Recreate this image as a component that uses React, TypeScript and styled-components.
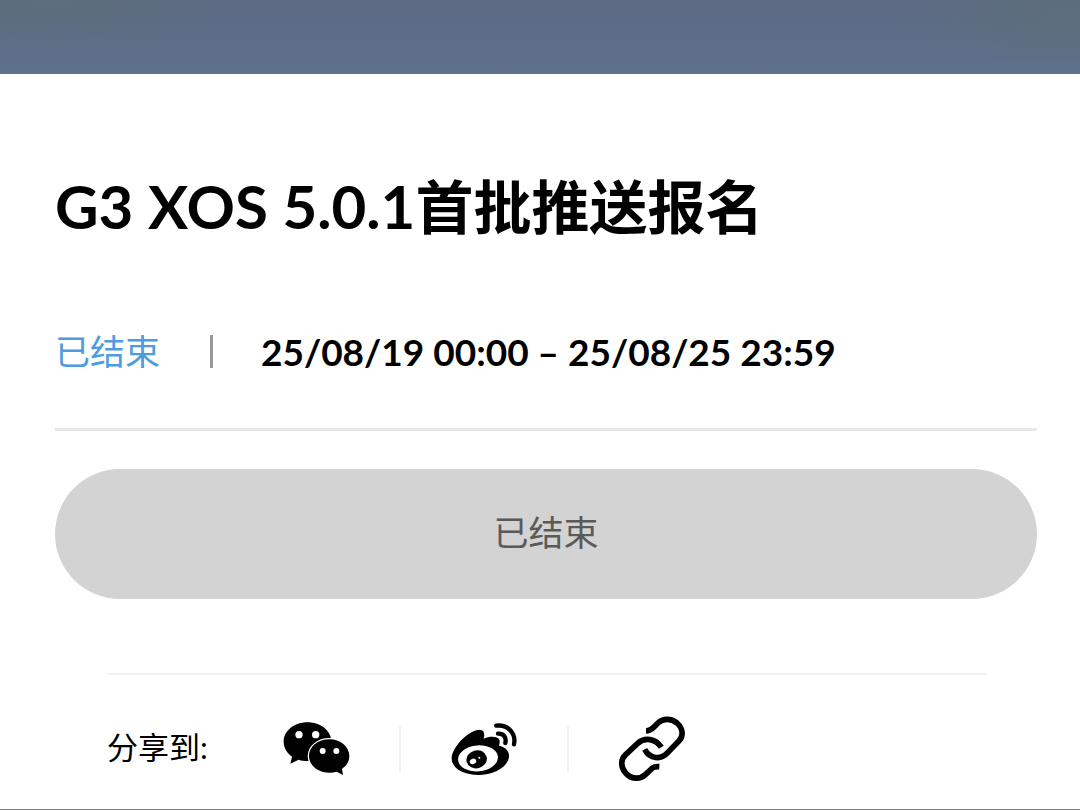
import React from "react";
import styled, { createGlobalStyle } from "styled-components";

const GlobalStyle = createGlobalStyle`
  *, *::before, *::after { box-sizing: border-box; }
  body {
    margin: 0;
    background: #ffffff;
    color: #000000;
    font-family: Lato, "Noto Sans CJK SC", sans-serif;
  }
`;

const Page = styled.div`
  min-height: 100vh;
  border-bottom: 1px solid #848484;
`;

const Banner = styled.div`
  height: 74px;
  background:
    radial-gradient(ellipse 190px 50px at 5% 0, #5d6e7c, transparent),
    radial-gradient(ellipse 190px 50px at 100% 20%, #5d6e7c, transparent),
    linear-gradient(#5c6a83, #5e718b);
`;

const Content = styled.main`
  padding: 90px 43px 0 55px;
`;

const Title = styled.h1`
  margin: 0;
  font-size: 58px;
  line-height: 84px;
  font-weight: 700;
`;

const Version = styled.span`
  font-size: 60px;
`;

const Meta = styled.div`
  display: flex;
  align-items: center;
  height: 52px;
  margin-top: 76px;
  font-size: 35px;
`;

const Status = styled.span`
  width: 155px;
  padding-bottom: 4px;
  color: #4f9be0;
`;

const MetaRule = styled.span`
  width: 3px;
  height: 33px;
  margin-right: 48px;
  background: #999999;
`;

const Period = styled.span`
  font-size: 37px;
  font-weight: 700;
  white-space: nowrap;
`;

const Divider = styled.hr<{ $tone: string; $size: number }>`
  margin: 0;
  border: 0;
  height: ${(p) => p.$size}px;
  background: ${(p) => p.$tone};
`;

const EndedButton = styled.button`
  display: block;
  width: 100%;
  height: 130px;
  margin: 38px 0 74px;
  padding: 0 0 8px;
  border: 0;
  border-radius: 65px;
  background: #d3d3d3;
  color: #5a5a5a;
  font: inherit;
  font-size: 35px;
`;

const Summary = styled.header`
  padding-bottom: 51px;
`;

const Share = styled.section`
  margin: 0 50px 0 52px;
`;

const ShareRow = styled.div`
  display: flex;
  align-items: center;
  padding-top: 50px;
`;

const ShareLabel = styled.span`
  width: 124px;
  padding-bottom: 4px;
  font-size: 31px;
  line-height: 44px;
`;

const ShareButton = styled.button`
  display: flex;
  align-items: center;
  justify-content: center;
  width: 168px;
  height: 46px;
  padding: 0;
  border: 0;
  border-left: 2px solid #f0f0f0;
  background: none;
  color: #000000;
  cursor: pointer;

  &:first-of-type { border-left-color: transparent; }
`;

const Icon = styled.svg`
  display: block;
  flex: none;
  width: 68px;
  height: 68px;
`;

const WeChatIcon = () => (
  <Icon viewBox="37 15 204 204" aria-hidden="true">
    <path
      d="M113 37C74 37 42 62 42 95c0 18 10 34 25 45l-5 21 25-12c8 3 17 4 26 4 40 0 72-25 72-58S153 37 113 37z"
      fill="currentColor"
    />
    <path
      d="M179 88c-34 0-61 22-61 50s27 50 61 50c8 0 15-1 22-3l19 10-3-19c14-9 22-22 22-38 0-28-27-50-60-50z"
      fill="currentColor"
      stroke="#fff"
      strokeWidth="8"
      paintOrder="stroke"
    />
    <g fill="#fff">
      <circle cx="88" cy="74" r="11" />
      <circle cx="138" cy="74" r="11" />
      <circle cx="159" cy="123" r="9" />
      <circle cx="200" cy="123" r="9" />
    </g>
  </Icon>
);

const WeiboIcon = () => (
  <Icon viewBox="29 14 204 204" aria-hidden="true">
    <path
      d="M34 144C34 112 84 58 119 58c12 0 15 12 11 27 19-8 41-8 47 3 2 5 1 11-1 18 17 3 29 14 30 29 2 29-38 57-87 59-47 1-85-19-85-50z"
      fill="currentColor"
    />
    <ellipse cx="113" cy="144" rx="60" ry="39" fill="#fff" transform="rotate(-5 113 144)" />
    <ellipse cx="109" cy="147" rx="31" ry="27" fill="currentColor" transform="rotate(-15 109 147)" />
    <ellipse cx="98" cy="153" rx="10" ry="8" fill="#fff" transform="rotate(-25 98 153)" />
    <circle cx="117" cy="142" r="3" fill="#fff" />
    <path
      d="M168 46c34-4 60 22 53 56M173 70c17-1 26 11 22 28"
      fill="none"
      stroke="currentColor"
      strokeWidth="13"
      strokeLinecap="round"
    />
  </Icon>
);

const LinkIcon = () => (
  <Icon viewBox="54 27 204 204" aria-hidden="true">
    <path
      d="M138 75C150 75 156 69 162 63L174 51C188 37 213 36 231 51C250 68 251 91 236 106L201 142C183 161 150 160 134 130M184 124C166 96 133 94 113 112L77 146C62 160 61 182 76 200C93 221 120 221 136 206L156 187Q164 181 178 182"
      fill="none"
      stroke="currentColor"
      strokeWidth="17"
    />
  </Icon>
);

const shareTargets = [
  { name: "微信", Glyph: WeChatIcon },
  { name: "微博", Glyph: WeiboIcon },
  { name: "复制链接", Glyph: LinkIcon },
];

export default function App() {
  return (
    <Page>
      <GlobalStyle />
      <Banner />
      <Content>
        <Summary>
          <Title>
            <Version>G3 XOS 5.0.1</Version>首批推送报名
          </Title>
          <Meta>
            <Status>已结束</Status>
            <MetaRule />
            <Period>25/08/19 00:00 – 25/08/25 23:59</Period>
          </Meta>
        </Summary>
        <Divider $tone="#e8e8e8" $size={3} />
        <EndedButton type="button" disabled>已结束</EndedButton>
        <Share>
          <Divider $tone="#f2f2f2" $size={2} />
          <ShareRow>
            <ShareLabel>分享到:</ShareLabel>
            {shareTargets.map(({ name, Glyph }) => (
              <ShareButton key={name} type="button" aria-label={name}>
                <Glyph />
              </ShareButton>
            ))}
          </ShareRow>
        </Share>
      </Content>
    </Page>
  );
}
